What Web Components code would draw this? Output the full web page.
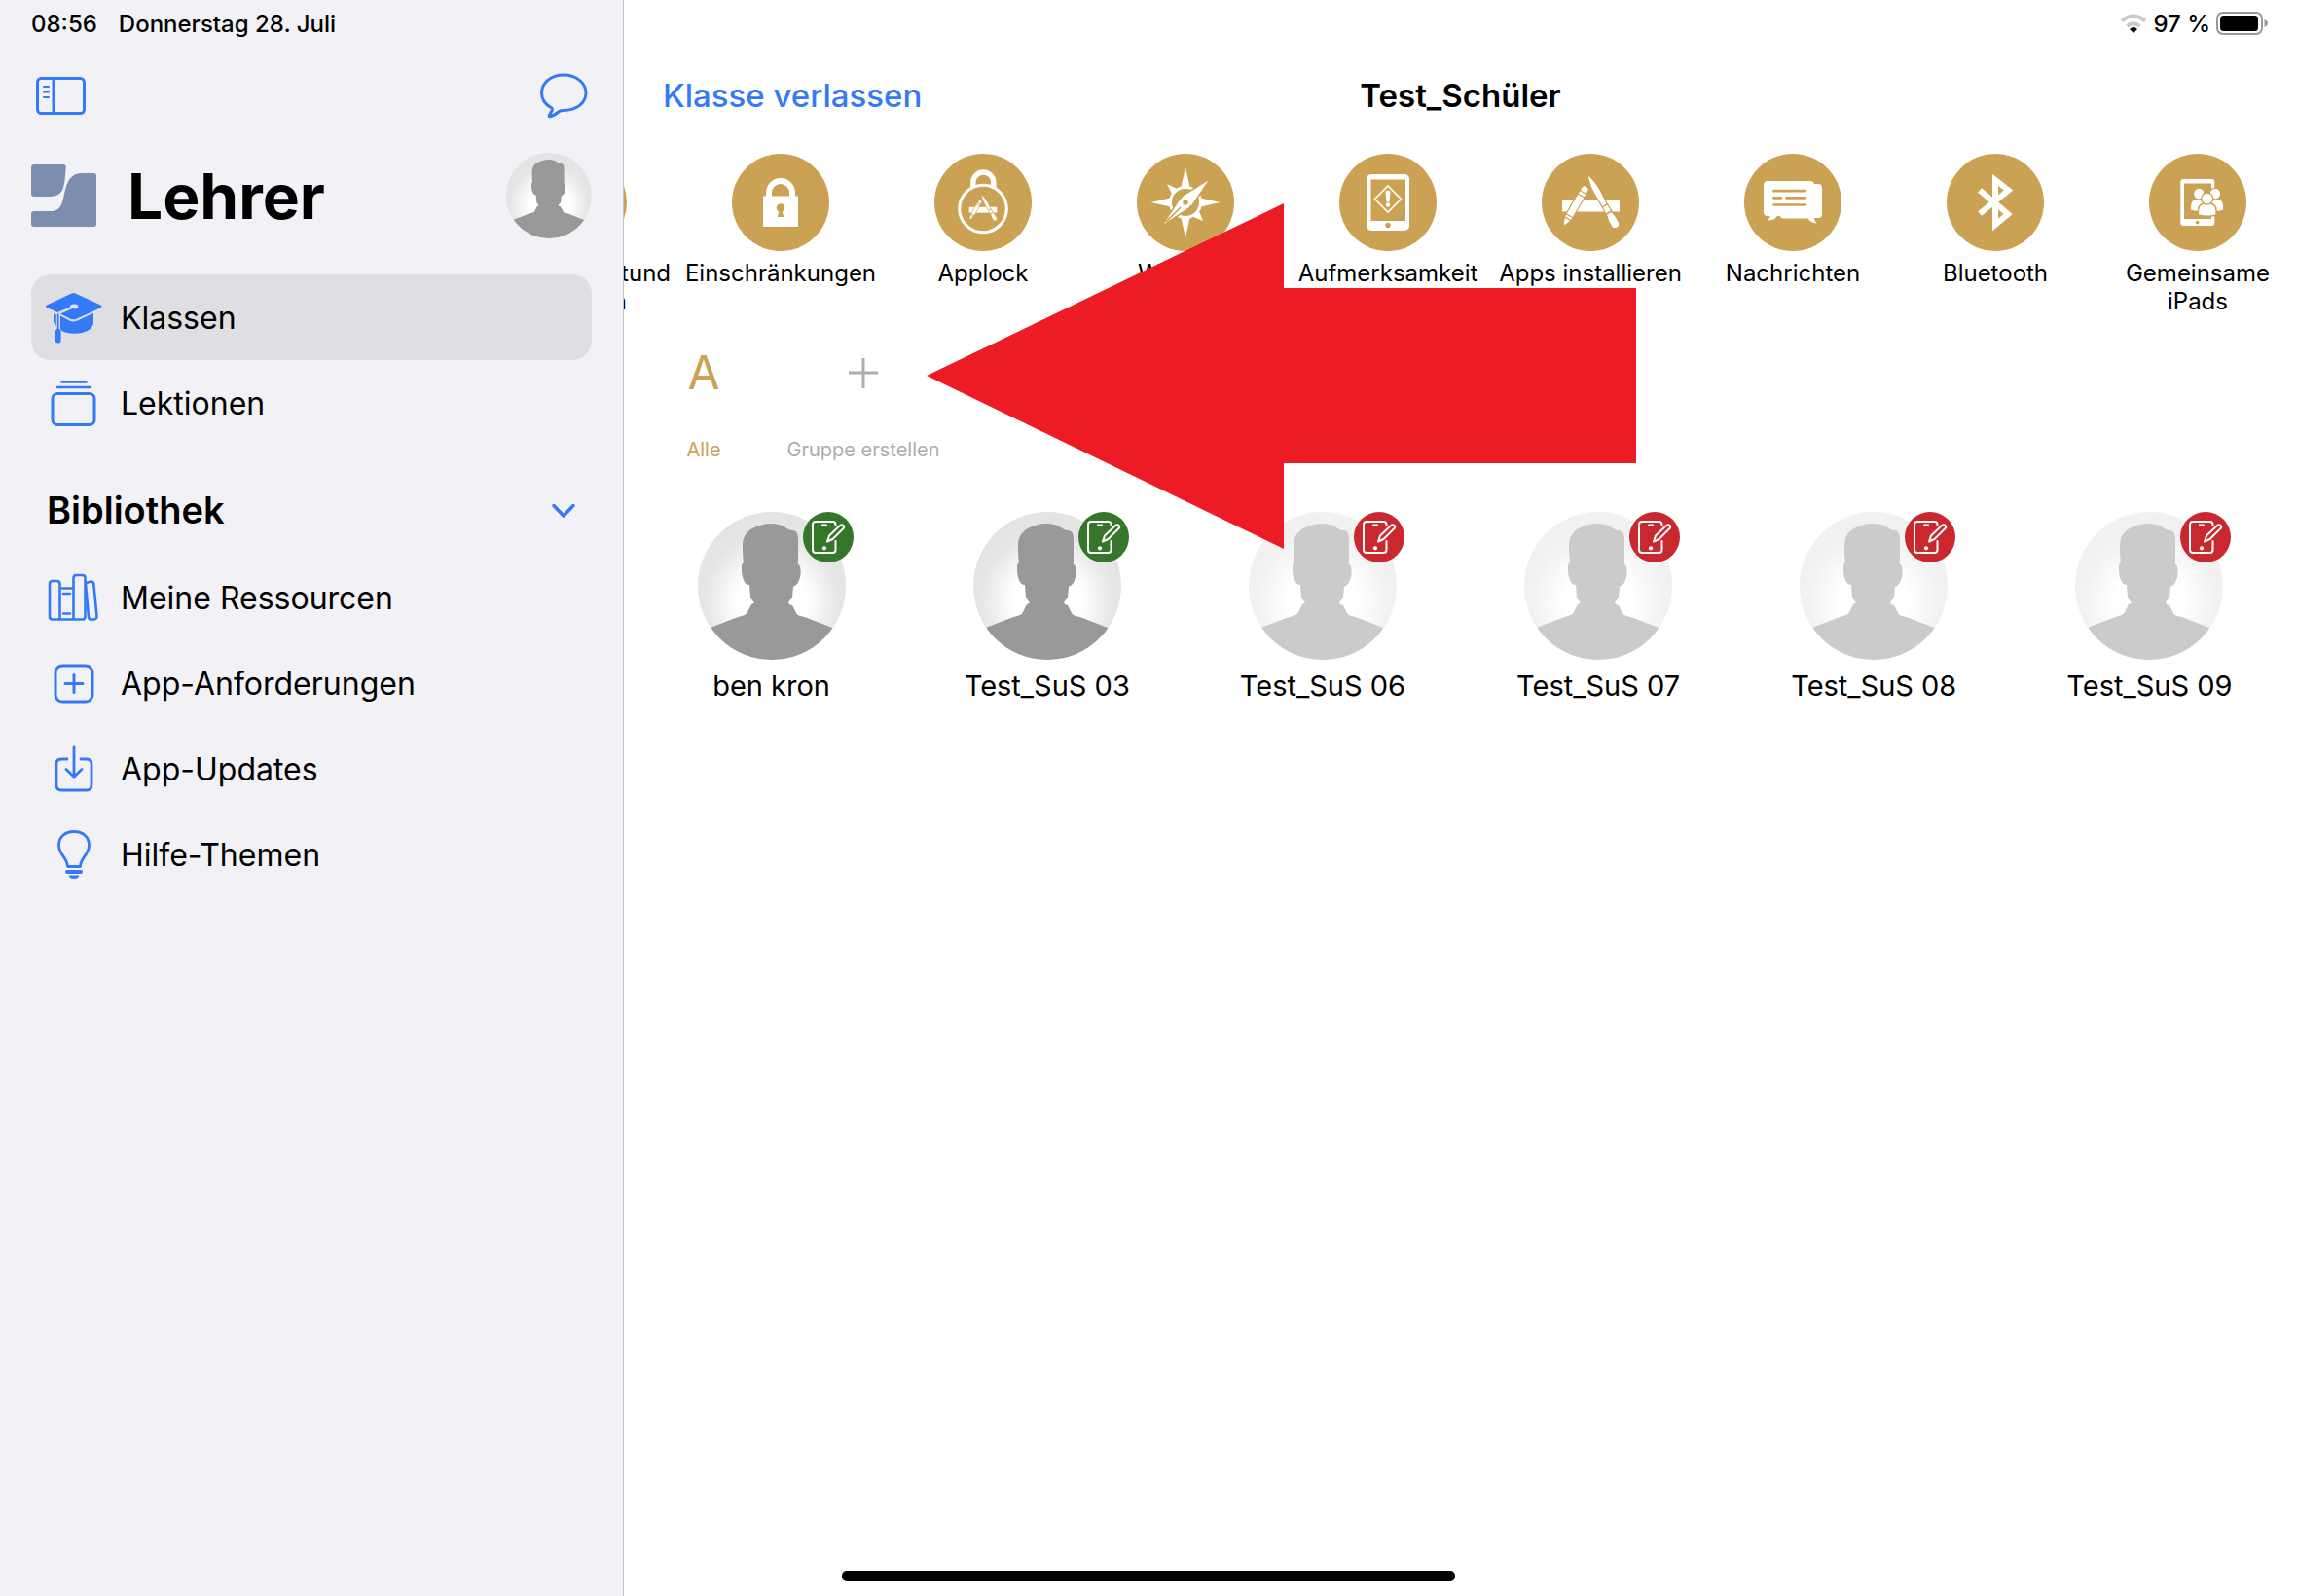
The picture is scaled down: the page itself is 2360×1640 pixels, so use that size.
<!DOCTYPE html>
<html lang="de">
<head>
<meta charset="utf-8">
<meta name="viewport" content="width=device-width, initial-scale=1">
<title>Lehrer</title>
<style>
  :root {
    --blue: #347af6;
    --gold: #cba153;
    --green: #35762a;
    --red: #c9282f;
    --grey: #adadad;
    --sidebar: #f2f1f6;
    --selected: #dfdee2;
    --line: #c5c4c8;
  }
  body {
    background: #fff;
    color: #000;
    font-family: Inter, "Liberation Sans", sans-serif;
    margin: 0;
  }
</style>
</head>
<body>
<teacher-app></teacher-app>

<script>
const ICONS = {
  sidebar: `<g fill="none" stroke="currentColor" stroke-width="3" stroke-linecap="round"><rect x="6.5" y="12.5" width="48" height="36" rx="4"/><path d="M23 13v35"/><path stroke-width="2" d="M13 21h5M13 26.500h5M13 32h5"/></g>`,
  chat: `<path fill="none" stroke="currentColor" stroke-width="3" stroke-linejoin="round" d="M31 9C18 9 8.500 17 8.500 27.500c0 6.500 3.500 11.500 9.500 15 1.500 1 2 2 1 3.500l-2.500 4c-.8 1.500 0 2 1.500 1.500 3.500-1 6-3 8.500-5 1-.8 2-1 4.500-1C44 45.500 54 38 54 27.500S44 9 31 9z"/>`,
  logo: `<path fill="#7b8eaf" d="M3 0h30q3 0 2.700 3.500C34 24 34 33 18 33H3q-3 0-3-3V3q0-3 3-3zM53 9h11q3 0 3 3v49q0 3-3 3H3q-3 0-3-3V51q0-3 3-3h17c12 0 12-10 15-22C38 15 42 9 53 9z"/>`,
  cap: `<path fill="currentColor" d="M27 5.700q2.500-1.200 5 0L57.500 17.500q2 1.200 0 2.700L33 31.500q-3.500 1.700-7 0l-10-5 12.500-5.500c3.500.8 6 0 6-2s-2-2.500-4.500-2.500-4.500 1-4 3L13 25 2 20q-2-1.200 0-2.500zM16 28.500l10 5.200q3.500 1.600 7 0l17-8v9c0 9-11 12-19.500 12-5.500 0-11-1-14.500-4zM9 26l2.800 1.500V39L9 35zM12.800 26.500h1.800v15l2 2.500v9.500q0 3-2.900 3t-2.900-3V44l2-2.500z"/>`,
  stack: `<g fill="none" stroke="currentColor" stroke-width="3"><rect x="8" y="20.500" width="43" height="32" rx="5"/><path stroke-linecap="round" stroke-width="2.500" d="M17.500 8.500h25M13 14h34"/></g>`,
  books: `<g fill="none" stroke="currentColor" stroke-width="2.600" stroke-linejoin="round" stroke-linecap="round"><path d="M15.500 52.500V16q0-3-3-3H8q-3 0-3 3v33.500q0 3 3 3h30.500q3 0 3-3V10q0-3-3-3h-6q-3 0-3 3v42.500M15.500 20.500h14M19 26h7M19 46.500h7"/><path d="M42.500 15l5-1.500q2.500 0 2.800 2.500l3.200 33q.3 3-2.500 3.500h-3q-2.600.2-3-2.500L42 16"/></g>`,
  plusbox: `<g fill="none" stroke="currentColor" stroke-width="3" stroke-linecap="round"><rect x="11" y="12" width="38" height="37" rx="7"/><path d="M21 30.500h18M30 21.500v18"/></g>`,
  download: `<g fill="none" stroke="currentColor" stroke-width="2.800" stroke-linecap="round" stroke-linejoin="round"><path d="M23 20h-6q-5 0-5 5v22q0 5 5 5h26q5 0 5-5V25q0-5-5-5h-6"/><path d="M30 8v30M22 30.500l8 7.700 8-7.700"/></g>`,
  bulb: `<path fill="none" stroke="currentColor" stroke-width="2.800" stroke-linejoin="round" d="M23.500 42.500c0-9-9-12-9-22C14.500 12 21 6.500 30 6.500S45.500 12 45.500 20.500c0 10-9 13-9 22z"/><path fill="currentColor" d="M23 46h14q2 0 2 2t-2 2H23q-2 0-2-2t2-2zM24.500 51.500h11q-1 3.500-5.500 3.500t-5.500-3.500z"/>`,
  chevron: `<path fill="none" stroke="currentColor" stroke-width="3.500" stroke-linecap="round" stroke-linejoin="round" d="M21 25.500l10 10.500 10-10.500"/>`,
  plus: `<path fill="none" stroke="currentColor" stroke-width="3" d="M15 30h30M30 15v31"/>`,
  wifi: `<g fill="none" stroke="#c9c9c9" stroke-width="4"><path d="M2 8.500q12-10 24 0"/><path d="M7.500 14q6.500-5.500 13 0"/></g><path d="M14 21l-4-4q4-4 8 0z"/>`,
  battery: `<rect x="1" y="1" width="46" height="22" rx="6" fill="none" stroke="#999" stroke-width="2"/><rect x="4" y="4" width="39" height="16" rx="3.500"/><path fill="#999" d="M49.500 8q3.500 1.500 3.500 4t-3.500 4z"/>`,
  lock: `<path fill="none" stroke="#fff" stroke-width="6" d="M38 45v-5a12 12 0 0 1 24 0v5"/><path fill="#fff" d="M32 43.500h36V75H32z"/><circle cx="50" cy="55.500" r="4.300"/><path d="M49 57h2l2.300 8h-6.600z"/>`,
  apps: `<path fill="#fff" d="M21 47.500h59v12H21z"/>
    <g fill="#fff" stroke="currentColor" stroke-width="1.200" stroke-linejoin="round">
      <g transform="translate(22 75) rotate(30)"><path d="M0 0l-4-9.500h8z"/><path d="M-4-9.500h8v-3.500h-8zM-4-13h8v-24h-8zM-4-37h8v-4h-8zM-4-41h8v-3q0-4-4-4t-4 4z"/></g>
      <g transform="translate(78 77) rotate(-29)"><path d="M0-64c3 8 4 16 3.500 24L3-27h-6l-.5-13c-.5-8 .5-16 3.500-24z"/><path d="M-3-27h6l.5 8h-7z"/><path d="M-3-18.500h6q2 7 1.500 14Q3.500-1 0-1t-4.500-3.500q-.5-7 1.500-14z"/></g>
    </g>`,
  compass: `<g fill="#fff"><path d="M50 14l4.500 20h-9zM50 86l4.500-20h-9zM14.500 50l20-4.500v9zM85.500 50l-20-4.500v9zM31 31l10 5-5 5zM68 69l-4-10-6 6z"/></g><circle cx="50" cy="50" r="15.500" fill="none" stroke="#fff" stroke-width="3"/><g stroke="currentColor" stroke-width="1.500"><path fill="#fff" d="M76 25L56 54.500 45.500 44z"/><path fill="#fff" d="M25 75l19.500-29.500 10 10z"/></g><path stroke="currentColor" stroke-width="1.600" d="M30 70l15-15"/><circle cx="50" cy="50" r="6" fill="#fff"/><circle cx="50" cy="50" r="2.700"/>`,
  attention: `<rect x="28" y="21" width="44" height="58" rx="5" fill="#fff"/><path d="M32.500 26.500h35.500V69H32.500z"/><circle cx="50" cy="73.500" r="2.700"/><path fill="none" stroke="#fff" stroke-width="1.600" d="M50 33L63.500 46.500 50 60 36.500 46.500z"/><path fill="#fff" d="M47.500 39q0-1.500 2.500-1.500t2.500 1.500l-1 10.500h-3z"/><circle cx="50" cy="52.500" r="2.200" fill="#fff"/>`,
  messages: `<path fill="#fff" d="M24 28h44q3 0 4 3h4q4 0 4 4v27q0 4-4 4h-4q0 3 2.500 5.500-6-.5-9-5H40q-2.500 0-3-2.500h-3q-3 4.500-9.500 4.500 2-2 2-4.500H24q-4 0-4-4V32q0-4 4-4z"/><path fill="none" stroke="currentColor" stroke-width="2.700" stroke-linecap="round" d="M30.500 38.200h32.500M30.500 45.300h7.500M43.500 45.300H63M30.500 52.500H63"/>`,
  bluetooth: `<path fill="none" stroke="#fff" stroke-width="6" stroke-miterlimit="10" d="M34 37.500L63 62 50 73V27l13.500 10.500L34 61.500"/>`,
  shared: `<rect x="32.300" y="26" width="35" height="48" rx="3" fill="#fff"/><path d="M36 30.500h28V67H36z"/><circle cx="49.700" cy="70.600" r="1.900"/><g fill="#fff" stroke="currentColor" stroke-width="1.300"><path d="M42.500 58.500V53q0-7 9-7.500 9 .5 9 7.500v5.500q-9 2-18 0zM59 58.500V53q0-7 9-7.500 8.700.5 8.700 7.500v5.500q-9 2-17.700 0z"/><circle cx="51.300" cy="41" r="5.800"/><circle cx="68" cy="41" r="5.800"/><path d="M50.500 63V58q0-7 9.200-7.500 9.300.5 9.300 7.500v5q-9 2.500-18.500 0z"/><circle cx="59.700" cy="46" r="6"/></g>`,
  edit: `<g fill="none" stroke="#fff" stroke-width="2" stroke-linecap="round" stroke-linejoin="round"><path d="M33.500 14v-1q0-3-3-3H13q-3 0-3 3v26q0 3 3 3h17.500q3 0 3-3v-9M20 13.500h4"/><path d="M25 30.500l2-6L38 14q2-1.500 3.500 0t0 3L30.500 28z"/></g><circle cx="22" cy="37.300" r="2.100" fill="#fff"/>`
};
// padlock whose body carries a small copy of the apps drawing
ICONS.applock = `<path fill="none" stroke="#fff" stroke-width="5.500" d="M39.800 36v-6.500a10.500 10.500 0 0 1 21 0V36"/><circle cx="50" cy="56.500" r="24.300" fill="currentColor" stroke="#fff" stroke-width="3"/><g transform="translate(50 55.500) scale(.485) translate(-50.500 -49)">${ICONS.apps}</g>`;

const svg = (name, width, height = width) =>
  `<svg width="${width}" height="${height}" viewBox="0 0 ${width} ${height}" fill="currentColor" aria-hidden="true">${ICONS[name]}</svg>`;

class BaseElement extends HTMLElement {
  connectedCallback() {
    if (this.shadowRoot) return;
    this.attachShadow({ mode: "open" }).innerHTML = `
    <style>
    * {
      box-sizing: border-box;
    }
    svg {
      display: block;
      flex: none;
    }
    button {
      background: none;
      border: 0;
      color: inherit;
      cursor: pointer;
      font: inherit;
      margin: 0;
      padding: 0;
    }
    </style>
    ${this.render()}`;
    this.ready();
  }

  ready() {}
}

class UserAvatar extends BaseElement {
  render() {
    return `
    <style>
    :host {
      border-radius: 50%;
      display: block;
      height: 152px;
      overflow: hidden;
      width: 152px;
    }
    :host([small]) {
      height: 88px;
      width: 88px;
    }
    :host([offline]) {
      opacity: 0.5;
    }
    svg {
      height: 100%;
      width: 100%;
    }
    </style>
    <svg viewBox="0 0 152 152" role="img" aria-label="Profilbild">
      <defs>
        <radialGradient id="shade" gradientUnits="userSpaceOnUse" cx="76" cy="92" r="80">
          <stop offset="0.45" stop-color="#fff"/>
          <stop offset="0.85" stop-color="#e6e6e6"/>
          <stop offset="1" stop-color="#e4e4e4"/>
        </radialGradient>
      </defs>
      <path fill="url(#shade)" d="M0 0h152v152H0z"/>
      <path fill="#999" d="M75 12c-7 0-13 2-19 5-7 4-10 10-10 18 0 6 0 11 1 17-2 1-2 3-2 5 0 4 0 9 2 13 1 3 3 5 6 5l1 13q1 2 4 5.500l-3 1.500-4 8q-1 2-3 3l-8 2.500-26 10V152h124v-33l-27-10.500-7-2q-2-.5-3-2.500l-4-8-3-1-1-2 4-5 1-11c3-2 5-3 6-7 2-4 2-10 1-14-1-2-3-2-2-5V30c0-7-1-10-5-11-4 0-5-1-8-3-4-3-9-4-15-4z"/>
    </svg>`;
  }
}

class NavItem extends BaseElement {
  render() {
    return `
    <style>
    :host {
      display: block;
    }
    a {
      align-items: center;
      border-radius: 20px;
      color: inherit;
      display: flex;
      font-size: 32px;
      gap: 18px;
      height: 88px;
      padding: 0 14px;
      text-decoration: none;
    }
    :host([selected]) a {
      background: var(--selected);
    }
    svg {
      color: var(--blue);
    }
    </style>
    <a href="#${this.getAttribute("icon")}">
      ${svg(this.getAttribute("icon"), 60)}
      <span><slot></slot></span>
    </a>`;
  }
}

class SideBar extends BaseElement {
  render() {
    return `
    <style>
    :host {
      background: var(--sidebar);
      border-right: 1px solid var(--line);
      display: block;
      padding: 0 32px;
    }
    .status {
      align-items: center;
      display: flex;
      font-size: 24px;
      font-weight: 500;
      gap: 22px;
      height: 48px;
    }
    .actions,
    .title,
    .section {
      align-items: center;
      display: flex;
      justify-content: space-between;
    }
    .actions {
      color: var(--blue);
      height: 100px;
    }
    .title {
      gap: 32px;
      height: 106px;
      margin-bottom: 28px;
    }
    h1 {
      flex: 1;
      font-size: 64px;
      font-weight: 700;
      margin: 0;
    }
    .section {
      height: 112px;
      padding: 20px 0 0 16px;
    }
    h2 {
      font-size: 38px;
      font-weight: 600;
      margin: 0;
    }
    .section svg {
      color: var(--blue);
    }
    </style>
    <div class="status"><time>08:56</time><span>Donnerstag 28. Juli</span></div>
    <div class="actions">
      <button aria-label="Seitenleiste">${svg("sidebar", 60)}</button>
      <button aria-label="Chat">${svg("chat", 60)}</button>
    </div>
    <div class="title">
      ${svg("logo", 67, 64)}
      <h1>Lehrer</h1>
      <user-avatar small></user-avatar>
    </div>
    <nav>
      <nav-item icon="cap" selected>Klassen</nav-item>
      <nav-item icon="stack">Lektionen</nav-item>
      <div class="section">
        <h2>Bibliothek</h2>
        <button aria-label="Bibliothek einklappen">${svg("chevron", 60)}</button>
      </div>
      <nav-item icon="books">Meine Ressourcen</nav-item>
      <nav-item icon="plusbox">App-Anforderungen</nav-item>
      <nav-item icon="download">App-Updates</nav-item>
      <nav-item icon="bulb">Hilfe-Themen</nav-item>
    </nav>`;
  }
}

class ToolButton extends BaseElement {
  render() {
    const icon = this.getAttribute("icon");
    return `
    <style>
    :host {
      display: block;
      flex: none;
      width: 208px;
    }
    button {
      align-items: center;
      display: flex;
      flex-direction: column;
      font-size: 24px;
      gap: 8px;
      line-height: 29px;
      width: 100%;
    }
    .disc {
      background: var(--gold);
      border-radius: 50%;
      color: var(--gold);
      height: 100px;
      width: 100px;
    }
    </style>
    <button>
      <span class="disc">${icon ? svg(icon, 100) : ""}</span>
      <span><slot></slot></span>
    </button>`;
  }
}

class ToolStrip extends BaseElement {
  render() {
    return `
    <style>
    :host {
      display: flex;
      height: 192px;
      overflow-x: auto;
      overflow-y: hidden;
      padding-top: 10px;
      box-sizing: border-box;
      scrollbar-width: none;
    }
    </style>
    <slot></slot>`;
  }
}

class GroupButton extends BaseElement {
  render() {
    return `
    <style>
    :host {
      color: var(--grey);
      display: block;
      width: 164px;
    }
    :host([selected]) {
      color: var(--gold);
    }
    button {
      align-items: center;
      display: flex;
      flex-direction: column;
      font-size: 20px;
      gap: 22px;
      line-height: 28px;
      white-space: nowrap;
      width: 100%;
    }
    .mark {
      align-items: center;
      display: flex;
      font-size: 48px;
      height: 86px;
    }
    </style>
    <button>
      <span class="mark"><slot name="mark">${svg("plus", 60)}</slot></span>
      <span><slot></slot></span>
    </button>`;
  }
}

class StudentCard extends BaseElement {
  render() {
    const offline = this.hasAttribute("offline") ? "offline" : "";
    return `
    <style>
    :host {
      align-items: center;
      display: flex;
      flex-direction: column;
      font-size: 29px;
      gap: 8px;
      line-height: 38px;
    }
    .photo {
      position: relative;
    }
    .badge {
      background: var(--green);
      border-radius: 50%;
      height: 52px;
      position: absolute;
      right: -8px;
      top: 0;
      width: 52px;
    }
    :host([offline]) .badge {
      background: var(--red);
    }
    </style>
    <div class="photo">
      <user-avatar ${offline}></user-avatar>
      <div class="badge">${svg("edit", 52)}</div>
    </div>
    <span><slot></slot></span>`;
  }
}

class ClassView extends BaseElement {
  render() {
    return `
    <style>
    :host {
      display: block;
      min-width: 0;
      position: relative;
    }
    .status {
      align-items: center;
      display: flex;
      font-size: 24px;
      font-weight: 500;
      gap: 6px;
      height: 48px;
      justify-content: flex-end;
      padding-right: 29px;
    }
    header {
      align-items: center;
      display: grid;
      font-size: 33px;
      grid-template-columns: 1fr auto 1fr;
      height: 100px;
      padding: 0 40px;
    }
    header button {
      color: var(--blue);
      font-weight: 500;
      justify-self: start;
    }
    h2 {
      font-size: 33px;
      font-weight: 600;
      margin: 0;
    }
    .groups {
      display: flex;
    }
    .students {
      display: grid;
      grid-template-columns: repeat(6, 1fr);
      padding: 50px 10px;
    }
    .arrow {
      fill: #ed1c24;
      left: 311px;
      pointer-events: none;
      position: absolute;
      top: 209px;
    }
    </style>
    <div class="status">${svg("wifi", 28, 22)}<span>97 %</span>${svg("battery", 54, 24)}</div>
    <header>
      <button>Klasse verlassen</button>
      <h2>Test_Schüler</h2>
    </header>
    <tool-strip>
      <tool-button>Unterrichtsstund<br>beenden</tool-button>
      <tool-button icon="lock">Einschränkungen</tool-button>
      <tool-button icon="applock">Applock</tool-button>
      <tool-button icon="compass">Weblock</tool-button>
      <tool-button icon="attention">Aufmerksamkeit</tool-button>
      <tool-button icon="apps">Apps installieren</tool-button>
      <tool-button icon="messages">Nachrichten</tool-button>
      <tool-button icon="bluetooth">Bluetooth</tool-button>
      <tool-button icon="shared">Gemeinsame<br>iPads</tool-button>
    </tool-strip>
    <div class="groups">
      <group-button selected><span slot="mark">A</span>Alle</group-button>
      <group-button>Gruppe erstellen</group-button>
    </div>
    <div class="students">
      <student-card>ben kron</student-card>
      <student-card>Test_SuS 03</student-card>
      <student-card offline>Test_SuS 06</student-card>
      <student-card offline>Test_SuS 07</student-card>
      <student-card offline>Test_SuS 08</student-card>
      <student-card offline>Test_SuS 09</student-card>
    </div>
    <svg class="arrow" width="729" height="355" viewBox="0 0 729 355" aria-hidden="true">
      <path d="M0 177L367 0v87h362v180H367v88z"/>
    </svg>`;
  }

  // the strip opens scrolled past its first tool
  ready() {
    this.shadowRoot.querySelector("tool-strip").scrollLeft = 151;
  }
}

class TeacherApp extends BaseElement {
  render() {
    return `
    <style>
    :host {
      display: grid;
      grid-template-columns: 641px 1fr;
      min-height: 100vh;
      position: relative;
    }
    .home {
      background: #000;
      border-radius: 5px;
      bottom: 15px;
      height: 11px;
      justify-self: center;
      position: absolute;
      width: 630px;
    }
    </style>
    <side-bar></side-bar>
    <class-view></class-view>
    <div class="home"></div>`;
  }
}

window.customElements.define("user-avatar", UserAvatar);
window.customElements.define("nav-item", NavItem);
window.customElements.define("side-bar", SideBar);
window.customElements.define("tool-button", ToolButton);
window.customElements.define("tool-strip", ToolStrip);
window.customElements.define("group-button", GroupButton);
window.customElements.define("student-card", StudentCard);
window.customElements.define("class-view", ClassView);
window.customElements.define("teacher-app", TeacherApp);
</script>
</body>
</html>
